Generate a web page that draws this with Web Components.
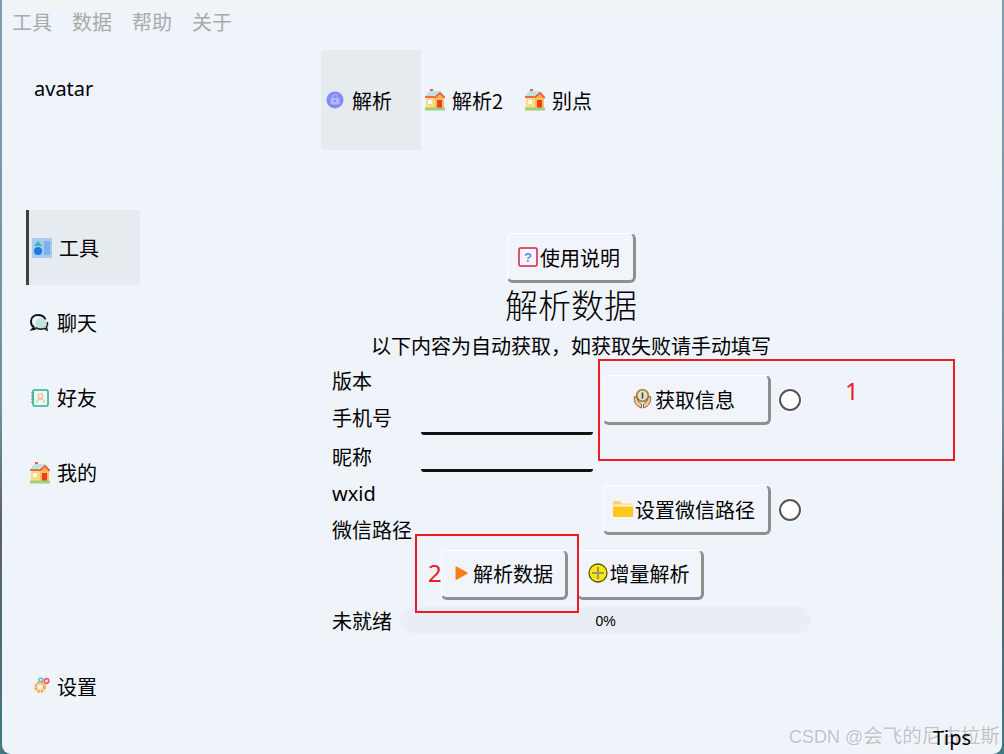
<!DOCTYPE html>
<html lang="zh">
<head>
<meta charset="utf-8">
<title>解析数据</title>
<style>
    html, body {
        margin: 0;
        height: 754px;
        overflow: hidden;
        background: linear-gradient(180deg, #7d9fb2 0%, #6f8f9b 55%, #59606a 70%, #3f7a80 100%);
        font-family: "Noto Sans CJK SC", "Noto Sans", sans-serif;
    }
</style>
</head>
<body>
<app-window>
    <menu-bar slot="menu"></menu-bar>
    <side-nav slot="side">
        <nav-item icon="blocks" selected>工具</nav-item>
        <nav-item icon="chat">聊天</nav-item>
        <nav-item icon="book">好友</nav-item>
        <nav-item icon="house">我的</nav-item>
        <nav-item icon="gears" slot="bottom">设置</nav-item>
    </side-nav>
    <tab-bar slot="tabs">
        <tab-item icon="lock" selected>解析</tab-item>
        <tab-item icon="house">解析2</tab-item>
        <tab-item icon="house">别点</tab-item>
    </tab-bar>
    <parse-page slot="page"></parse-page>
</app-window>

<script>
// every icon is drawn in its own pixels: [width, height, markup]
const ICONS = {
    blocks: [20, 20, `<rect width="20" height="20" fill="#a5cbee"/><path d="M6 3l4 5H2z" fill="#45b39d"/><circle cx="6" cy="13" r="4" fill="#1e78e0"/><rect x="12" y="3" width="6" height="14" fill="#7fb0f2"/>`],
    chat: [20, 20, `<path d="M4 14.500l-2 2 3.800-.6" fill="none" stroke="#111" stroke-width="1.800"/><path d="M4.500 14.500C2.500 13.500 1 11.500 1 8.500 1 4.500 4 2 8 2s6.500 2 7.500 4.500" fill="none" stroke="#111" stroke-width="2"/><circle cx="11" cy="10.500" r="5.500" fill="#bfe6da"/><path d="M5.500 14.500c2.500 1.800 6 2 9 1l2.500 1.500-.6-3c1-1.300 1.400-3 1-5" fill="none" stroke="#222" stroke-width="1.600"/>`],
    book: [20, 20, `<rect x="3" y="2" width="15" height="16" rx="1.500" fill="#eef8f5" stroke="#2bb394" stroke-width="1.600"/><path d="M1 5h3M1 8h3M1 11h3M1 14h3" stroke="#2bb394" stroke-width="1.200"/><circle cx="10.500" cy="8" r="2.300" fill="none" stroke="#f3b98a" stroke-width="1.200"/><path d="M6.500 15c.5-3 2-4 4-4s3.500 1 4 4" fill="none" stroke="#f3b98a" stroke-width="1.200"/>`],
    house: [20, 22, `<rect x="5" y="0" width="3" height="3" fill="#ee5a50"/><path d="M3 3.500Q4 2 6 2h8q2 0 3 1.500L20 8H0z" fill="#bfe3e0"/><rect x="1" y="8" width="18" height="11" fill="#fbdc7c"/><path d="M0 8h9" stroke="#ef4a3c" stroke-width="1.600"/><path d="M9 9l6-5 5 5" fill="#f9b042" stroke="#ef4a3c" stroke-width="1.500"/><rect x="10" y="9" width="9" height="10" fill="#f9c24e"/><rect x="12" y="11" width="5" height="8" fill="#ee3b2d"/><rect x="3" y="11" width="4" height="4" fill="#fff"/><rect y="18.500" width="20" height="3" fill="#9ed080"/>`],
    gears: [20, 20, `<circle cx="10" cy="10" r="4.300" fill="none" stroke="#f9a93a" stroke-width="3" stroke-dasharray="2.400 1"/><circle cx="10.700" cy="2.700" r="1.800" fill="none" stroke="#62c4c9" stroke-width="1.500"/><circle cx="16.500" cy="4" r="2.300" fill="none" stroke="#ef5b63" stroke-width="1.700"/>`],
    lock: [18, 18, `<circle cx="9" cy="9" r="8.500" fill="#8289fa"/><rect x="4.500" y="7" width="9" height="6.500" rx="1" fill="#aeb6fc"/><path d="M6.500 7V6a2.500 2.500 0 0 1 5 0v1" fill="none" stroke="#aeb6fc" stroke-width="1.200"/><rect x="8" y="9" width="2" height="2" fill="#8289fa"/>`],
    help: [20, 20, `<rect x="1" y="1" width="18" height="18" rx="1.500" fill="#f5f6fb" stroke="#d4204f" stroke-width="1.500"/><text x="10" y="15" text-anchor="middle" font-size="13" font-weight="700" font-family="Liberation Sans" fill="#6f83e8">?</text>`],
    info: [20, 20, `<circle cx="9.500" cy="6.500" r="5.800" fill="#e4dfc8" stroke="#a5843f" stroke-width="1.800"/><rect x="8.700" y="3.500" width="1.600" height="6" fill="#4a4230"/><path d="M1.500 7.500c-1 5 1.500 10 7 11.500v-4L5 12 3.500 8z" fill="#f3c69a" stroke="#7a5c3c" stroke-width=".9"/><path d="M17.500 7.500c1 5-1.500 10-7 11.500v-4l3.500-3 1.500-4z" fill="#f3c69a" stroke="#7a5c3c" stroke-width=".9"/>`],
    folder: [20, 20, `<path d="M0 3.500A1.500 1.500 0 0 1 1.500 2h5l2 2.500H18A1.500 1.500 0 0 1 19.500 6v1H0z" fill="#f8d16c"/><rect x="1" y="5.500" width="17.500" height="3" fill="#fdf3d2"/><rect y="7.500" width="20" height="10.500" rx="1" fill="#ffc61e"/>`],
    play: [14, 14, `<path d="M1.500 1.500a1 1 0 0 1 1.500-.8l10 5.500a1 1 0 0 1 0 1.800L3 13.500a1 1 0 0 1-1.500-.8z" fill="#fb7c13"/>`],
    plus: [20, 20, `<circle cx="10" cy="10" r="9" fill="#fbe710" stroke="#55520e" stroke-width="1.300"/><path d="M10 4v12M4 10h12" stroke="#9a9a66" stroke-width="2.200"/>`]
};

class AppIcon extends HTMLElement {
    connectedCallback() {
        const [w, h, markup] = ICONS[this.getAttribute('name')];
        this.attachShadow({ mode: 'open' });
        this.shadowRoot.innerHTML = `
            <style>
                :host { display: inline-flex; flex: none; }
                svg { display: block; }
            </style>
            <svg width="${w}" height="${h}" viewBox="0 0 ${w} ${h}">${markup}</svg>
        `;
    }
}
customElements.define('app-icon', AppIcon);

class AppWindow extends HTMLElement {
    constructor() {
        super();
        this.attachShadow({ mode: 'open' });
        this.shadowRoot.innerHTML = `
            <style>
                :host {
                    display: flex;
                    flex-direction: column;
                    position: relative;
                    width: 1000px;
                    height: 754px;
                    margin-left: 2px;
                    overflow: hidden;
                    background: #eff4fb;
                    border-radius: 0 0 9px 9px;
                    color: #000;
                }
                .cols { display: flex; flex: 1; min-height: 0; }
                .side { flex: none; width: 138px; }
                .main { flex: none; width: 500px; margin-left: 181px; display: flex; flex-direction: column; }
                .tips { position: absolute; left: 931px; top: 725px; font: 20px/26px "Noto Sans", sans-serif; }
                .mark {
                    position: absolute; left: 787px; top: 723px;
                    font: 18px/26px "Liberation Sans", "Noto Sans CJK SC", sans-serif;
                    color: rgba(120, 120, 120, .42);
                    text-shadow: 1px 1px 0 rgba(255, 255, 255, .5);
                    white-space: nowrap;
                }
                .mark span { font-size: 19.500px; }
            </style>
            <slot name="menu"></slot>
            <div class="cols">
                <div class="side"><slot name="side"></slot></div>
                <div class="main">
                    <slot name="tabs"></slot>
                    <slot name="page"></slot>
                </div>
            </div>
            <div class="mark">CSDN @<span>会飞的尼古拉斯</span></div>
            <div class="tips">Tips</div>
        `;
    }
}
customElements.define('app-window', AppWindow);

class MenuBar extends HTMLElement {
    constructor() {
        super();
        this.attachShadow({ mode: 'open' });
        this.shadowRoot.innerHTML = `
            <style>
                :host {
                    display: flex;
                    flex: none;
                    gap: 20px;
                    height: 50px;
                    box-sizing: border-box;
                    padding: 8px 0 0 10px;
                    font-size: 20px;
                    line-height: 28px;
                    color: #a9a9a9;
                    background: linear-gradient(#f3f3f3 4px, transparent 4px);
                }
            </style>
            <span>工具</span><span>数据</span><span>帮助</span><span>关于</span>
        `;
    }
}
customElements.define('menu-bar', MenuBar);

class SideNav extends HTMLElement {
    constructor() {
        super();
        this.attachShadow({ mode: 'open' });
        this.shadowRoot.innerHTML = `
            <style>
                :host {
                    display: flex;
                    flex-direction: column;
                    height: 704px;
                    padding-left: 24px;
                }
                .avatar {
                    height: 160px;
                    box-sizing: border-box;
                    padding: 24px 0 0 8px;
                    font: 20px/30px "Noto Sans", sans-serif;
                }
                .bottom { margin-top: auto; margin-bottom: 30px; }
            </style>
            <div class="avatar">avatar</div>
            <slot></slot>
            <div class="bottom"><slot name="bottom"></slot></div>
        `;
    }
}
customElements.define('side-nav', SideNav);

class NavItem extends HTMLElement {
    constructor() {
        super();
        this.attachShadow({ mode: 'open' });
        this.shadowRoot.innerHTML = `
            <style>
                :host {
                    display: flex;
                    align-items: center;
                    height: 75px;
                    box-sizing: border-box;
                    padding-left: 4px;
                    gap: 7px;
                    font-size: 20px;
                }
                :host([selected]) {
                    background: #e6ebef;
                    border-left: 3px solid #404040;
                    padding-left: 3px;
                }
            </style>
            <app-icon name="${this.getAttribute('icon')}"></app-icon>
            <span><slot></slot></span>
        `;
    }
}
customElements.define('nav-item', NavItem);

class TabBar extends HTMLElement {
    constructor() {
        super();
        this.attachShadow({ mode: 'open' });
        this.shadowRoot.innerHTML = `
            <style>
                :host { display: flex; flex: none; height: 100px; margin-bottom: 83px; }
            </style>
            <slot></slot>
        `;
    }
}
customElements.define('tab-bar', TabBar);

class TabItem extends HTMLElement {
    constructor() {
        super();
        this.attachShadow({ mode: 'open' });
        const icon = this.getAttribute('icon');
        this.shadowRoot.innerHTML = `
            <style>
                :host {
                    display: flex;
                    align-items: center;
                    width: 100px;
                    box-sizing: border-box;
                    padding-left: ${icon === 'lock' ? 5 : 4}px;
                    gap: ${icon === 'lock' ? 8 : 7}px;
                    font-size: 20px;
                }
                :host([selected]) { background: #e6ebef; }
            </style>
            <app-icon name="${icon}"></app-icon>
            <span><slot></slot></span>
        `;
    }
}
customElements.define('tab-item', TabItem);

class UiButton extends HTMLElement {
    constructor() {
        super();
        this.attachShadow({ mode: 'open' });
        this.shadowRoot.innerHTML = `
            <style>
                :host {
                    display: inline-flex;
                    align-items: center;
                    justify-content: center;
                    flex: none;
                    box-sizing: border-box;
                    height: 50px;
                    gap: 2px;
                    font-size: 20px;
                    background: #f1f5fb;
                    border: 1px solid #fff;
                    border-right: 3px solid #8f8f8f;
                    border-bottom: 3px solid #8f8f8f;
                    border-radius: 6px;
                }
            </style>
            <app-icon name="${this.getAttribute('icon')}"></app-icon>
            <span><slot></slot></span>
        `;
    }
}
customElements.define('ui-button', UiButton);

class RadioDot extends HTMLElement {
    constructor() {
        super();
        this.attachShadow({ mode: 'open' });
        this.shadowRoot.innerHTML = `
            <style>
                :host {
                    display: block;
                    flex: none;
                    box-sizing: border-box;
                    width: 22px;
                    height: 22px;
                    border: 2px solid #555;
                    border-radius: 50%;
                    background: #fff;
                    box-shadow: 0 0 0 1px #fff;
                }
            </style>
        `;
    }
}
customElements.define('radio-dot', RadioDot);

class LineInput extends HTMLElement {
    constructor() {
        super();
        this.attachShadow({ mode: 'open' });
        this.shadowRoot.innerHTML = `
            <style>
                :host {
                    display: block;
                    box-sizing: border-box;
                    width: 172px;
                    height: 36px;
                    border-bottom: 3px solid #111;
                    border-radius: 0 0 3px 3px;
                }
            </style>
        `;
    }
}
customElements.define('line-input', LineInput);

class ProgressRow extends HTMLElement {
    constructor() {
        super();
        this.attachShadow({ mode: 'open' });
        this.shadowRoot.innerHTML = `
            <style>
                :host {
                    display: flex;
                    align-items: center;
                    height: 26px;
                    padding-left: 11px;
                    gap: 8px;
                    font-size: 20px;
                }
                .bar {
                    width: 411px;
                    height: 26px;
                    border-radius: 13px;
                    background: #e9edf5;
                    text-align: center;
                    font: 14px/28px "Liberation Sans Narrow", "Liberation Sans", sans-serif;
                }
            </style>
            <span>未就绪</span>
            <div class="bar">0%</div>
        `;
    }
}
customElements.define('progress-row', ProgressRow);

class NoteBox extends HTMLElement {
    constructor() {
        super();
        this.attachShadow({ mode: 'open' });
        this.shadowRoot.innerHTML = `
            <style>
                :host {
                    position: absolute;
                    box-sizing: border-box;
                    border: 2px solid #ed1c24;
                    pointer-events: none;
                }
                span {
                    position: absolute;
                    font: 24px/28px "Noto Sans", sans-serif;
                    color: #ed1c24;
                }
            </style>
            <span style="left:${this.getAttribute('nx')}px;top:${this.getAttribute('ny')}px">${this.getAttribute('label')}</span>
        `;
    }
}
customElements.define('note-box', NoteBox);

class ParsePage extends HTMLElement {
    constructor() {
        super();
        this.attachShadow({ mode: 'open' });
        this.shadowRoot.innerHTML = `
            <style>
                :host {
                    display: flex;
                    flex-direction: column;
                    position: relative;
                    font-size: 20px;
                }
                .center { display: flex; justify-content: center; }
                h1 {
                    margin: 0;
                    height: 48px;
                    font-size: 33px;
                    line-height: 42px;
                    font-weight: 300;
                    text-align: center;
                }
                .sub { height: 31px; line-height: 30px; text-align: center; }
                .form {
                    display: grid;
                    grid-template-columns: 89px 172px 10px auto;
                    grid-template-rows: 37px 37px 41px 34px 37px;
                    height: 188px;
                    padding-left: 11px;
                    align-items: center;
                }
                .form > span { grid-column: 1; line-height: 28px; }
                .form > line-input { grid-column: 2; align-self: start; }
                .right {
                    grid-column: 4;
                    grid-row: 1 / span 5;
                    align-self: start;
                    display: flex;
                    flex-direction: column;
                    gap: 60px;
                    padding-top: 13px;
                }
                .line { display: flex; align-items: center; gap: 8px; }
                .actions {
                    display: flex;
                    gap: 9px;
                    height: 50px;
                    margin-bottom: 7px;
                    padding-left: 120px;
                }
                .actions ui-button { padding-bottom: 2px; }
                .latin { font-family: "Noto Sans", sans-serif; }
            </style>
            <div class="center">
                <ui-button icon="help" style="width:129px;padding-right:2px">使用说明</ui-button>
            </div>
            <h1>解析数据</h1>
            <div class="sub">以下内容为自动获取，如获取失败请手动填写</div>
            <div class="form">
                <span>版本</span>
                <span style="grid-row:2">手机号</span>
                <line-input style="grid-row:2"></line-input>
                <span style="grid-row:3">昵称</span>
                <line-input style="grid-row:3"></line-input>
                <span class="latin" style="grid-row:4">wxid</span>
                <span style="grid-row:5">微信路径</span>
                <div class="right">
                    <div class="line"><ui-button icon="info" style="width:168px;padding-right:4px">获取信息</ui-button><radio-dot></radio-dot></div>
                    <div class="line"><ui-button icon="folder" style="width:168px;padding-right:4px">设置微信路径</ui-button><radio-dot></radio-dot></div>
                </div>
            </div>
            <div class="actions">
                <ui-button icon="play" style="width:127px;gap:5px">解析数据</ui-button>
                <ui-button icon="plus" style="width:127px;padding-right:2px">增量解析</ui-button>
            </div>
            <progress-row></progress-row>
            <note-box label="1" nx="245" ny="16" style="left:277px;top:126px;width:357px;height:102px"></note-box>
            <note-box label="2" nx="11" ny="23" style="left:94px;top:301px;width:164px;height:79px"></note-box>
        `;
    }
}
customElements.define('parse-page', ParsePage);
</script>
</body>
</html>
